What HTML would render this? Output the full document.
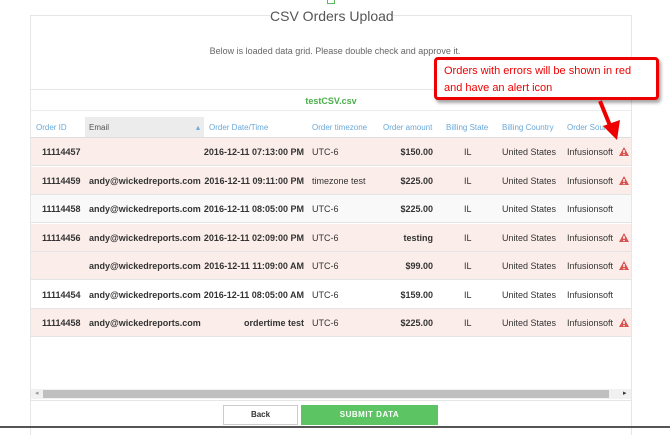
<!DOCTYPE html>
<html><head><meta charset="utf-8"><style>
*{margin:0;padding:0;box-sizing:border-box}
body{width:670px;height:428px;background:#fff;font-family:"Liberation Sans",sans-serif;position:relative;overflow:hidden}
.a{position:absolute;white-space:nowrap}
.panel{position:absolute;left:30px;top:15px;width:602px;height:420px;border:1px solid #e6e6e6;border-bottom:none}
.title{left:270px;top:8px;width:123px;background:#fff;text-align:center;font-size:14px;color:#555}
.row{position:absolute;left:31px;width:600px;height:28px;border-bottom:1px solid #e4e4e4;font-size:9px;color:#333}
.row span{position:absolute;top:9px;white-space:nowrap}
.b{font-weight:bold}
.err{background:#fbeeea}
.ok{background:#f9f9f9}
.h{font-size:8px;color:#6aa8d8;top:123px}
.row svg{position:absolute;left:588px;top:9px}
</style></head><body>
<div class="a" style="left:327px;top:0;width:8px;height:4px;border:1px solid #5cb85c;border-top:none"></div>
<div class="panel"></div>
<div class="a title">CSV Orders Upload</div>
<div class="a" style="left:0;width:670px;top:46px;text-align:center;font-size:9px;color:#666">Below is loaded data grid. Please double check and approve it.</div>
<div class="a" style="left:31px;top:89px;width:600px;border-top:1px solid #e6e6e6"></div>
<div class="a" style="left:0;width:662px;top:96px;text-align:center;font-size:9px;color:#4cae4c;font-weight:bold">testCSV.csv</div>
<div class="a" style="left:31px;top:110px;width:600px;border-top:1px solid #ececec"></div>
<div class="a" style="left:85px;top:117px;width:119px;height:20px;background:#ececec"></div>
<div class="a" style="left:31px;top:137px;width:600px;border-top:1px solid #ddd"></div>
<div class="a h" style="left:36px">Order ID</div>
<div class="a h" style="left:89px;color:#555">Email</div>
<div class="a h" style="left:196px;color:#6aa8d8">▴</div>
<div class="a h" style="left:209px">Order Date/Time</div>
<div class="a h" style="left:312px">Order timezone</div>
<div class="a h" style="left:383px">Order amount</div>
<div class="a h" style="left:446px">Billing State</div>
<div class="a h" style="left:502px">Billing Country</div>
<div class="a h" style="left:567px">Order Source</div>

<div class="row err" style="top:138px"><span class="b" style="left:11px">11114457</span><span class="b" style="right:327px">2016-12-11 07:13:00 PM</span><span style="left:281px">UTC-6</span><span class="b" style="right:198px">$150.00</span><span style="left:433px">IL</span><span style="left:471px">United States</span><span style="left:536px">Infusionsoft</span><svg width="10" height="9"><polygon points="5,0 10,9 0,9" fill="#d9534f"/><rect x="4.3" y="3" width="1.4" height="3" fill="#fff"/><rect x="4.3" y="7" width="1.4" height="1.2" fill="#fff"/></svg></div>
<div class="row err" style="top:167px"><span class="b" style="left:11px">11114459</span><span class="b" style="left:58px">andy@wickedreports.com</span><span class="b" style="right:327px">2016-12-11 09:11:00 PM</span><span style="left:281px">timezone test</span><span class="b" style="right:198px">$225.00</span><span style="left:433px">IL</span><span style="left:471px">United States</span><span style="left:536px">Infusionsoft</span><svg width="10" height="9"><polygon points="5,0 10,9 0,9" fill="#d9534f"/><rect x="4.3" y="3" width="1.4" height="3" fill="#fff"/><rect x="4.3" y="7" width="1.4" height="1.2" fill="#fff"/></svg></div>
<div class="row ok" style="top:195px"><span class="b" style="left:11px">11114458</span><span class="b" style="left:58px">andy@wickedreports.com</span><span class="b" style="right:327px">2016-12-11 08:05:00 PM</span><span style="left:281px">UTC-6</span><span class="b" style="right:198px">$225.00</span><span style="left:433px">IL</span><span style="left:471px">United States</span><span style="left:536px">Infusionsoft</span></div>
<div class="row err" style="top:224px"><span class="b" style="left:11px">11114456</span><span class="b" style="left:58px">andy@wickedreports.com</span><span class="b" style="right:327px">2016-12-11 02:09:00 PM</span><span style="left:281px">UTC-6</span><span class="b" style="right:198px">testing</span><span style="left:433px">IL</span><span style="left:471px">United States</span><span style="left:536px">Infusionsoft</span><svg width="10" height="9"><polygon points="5,0 10,9 0,9" fill="#d9534f"/><rect x="4.3" y="3" width="1.4" height="3" fill="#fff"/><rect x="4.3" y="7" width="1.4" height="1.2" fill="#fff"/></svg></div>
<div class="row err" style="top:252px"><span class="b" style="left:58px">andy@wickedreports.com</span><span class="b" style="right:327px">2016-12-11 11:09:00 AM</span><span style="left:281px">UTC-6</span><span class="b" style="right:198px">$99.00</span><span style="left:433px">IL</span><span style="left:471px">United States</span><span style="left:536px">Infusionsoft</span><svg width="10" height="9"><polygon points="5,0 10,9 0,9" fill="#d9534f"/><rect x="4.3" y="3" width="1.4" height="3" fill="#fff"/><rect x="4.3" y="7" width="1.4" height="1.2" fill="#fff"/></svg></div>
<div class="row" style="top:281px;background:#fff"><span class="b" style="left:11px">11114454</span><span class="b" style="left:58px">andy@wickedreports.com</span><span class="b" style="right:327px">2016-12-11 08:05:00 AM</span><span style="left:281px">UTC-6</span><span class="b" style="right:198px">$159.00</span><span style="left:433px">IL</span><span style="left:471px">United States</span><span style="left:536px">Infusionsoft</span></div>
<div class="row err" style="top:309px"><span class="b" style="left:11px">11114458</span><span class="b" style="left:58px">andy@wickedreports.com</span><span class="b" style="right:327px">ordertime test</span><span style="left:281px">UTC-6</span><span class="b" style="right:198px">$225.00</span><span style="left:433px">IL</span><span style="left:471px">United States</span><span style="left:536px">Infusionsoft</span><svg width="10" height="9"><polygon points="5,0 10,9 0,9" fill="#d9534f"/><rect x="4.3" y="3" width="1.4" height="3" fill="#fff"/><rect x="4.3" y="7" width="1.4" height="1.2" fill="#fff"/></svg></div>

<div class="a" style="left:31px;top:389px;width:600px;height:10px;background:#f1f1f1"></div>
<div class="a" style="left:43px;top:390px;width:566px;height:8px;background:#bfbfbf"></div>
<div class="a" style="left:35px;top:389px;font-size:7px;color:#999">◂</div>
<div class="a" style="left:623px;top:389px;font-size:7px;color:#333">▸</div>
<div class="a" style="left:31px;top:400px;width:600px;border-top:1px solid #e6e6e6"></div>
<div class="a" style="left:223px;top:405px;width:75px;height:20px;border:1px solid #ccc;font-size:8px;font-weight:bold;color:#333;text-align:center;line-height:18px">Back</div>
<div class="a" style="left:301px;top:405px;width:137px;height:20px;background:#5cc462;font-size:8px;font-weight:bold;color:#fff;text-align:center;line-height:20px;letter-spacing:.5px">SUBMIT DATA</div>
<div class="a" style="left:0;top:426px;width:670px;height:2px;background:#555"></div>

<div class="a" style="left:434px;top:57px;width:225px;height:43px;border:3px solid #e00;border-radius:4px;background:#fff;box-shadow:2px 3px 3px rgba(0,0,0,.35)"></div>
<div class="a" style="left:444px;top:63px;font-size:11px;color:#e00;line-height:17px">Orders with errors will be shown in red<br>and have an alert icon</div>
<svg class="a" style="left:590px;top:98px" width="40" height="46"><line x1="10" y1="3" x2="21" y2="30" stroke="#e00" stroke-width="4"/><polygon points="13,28 30,22 27,42" fill="#e00"/></svg>
</body></html>
